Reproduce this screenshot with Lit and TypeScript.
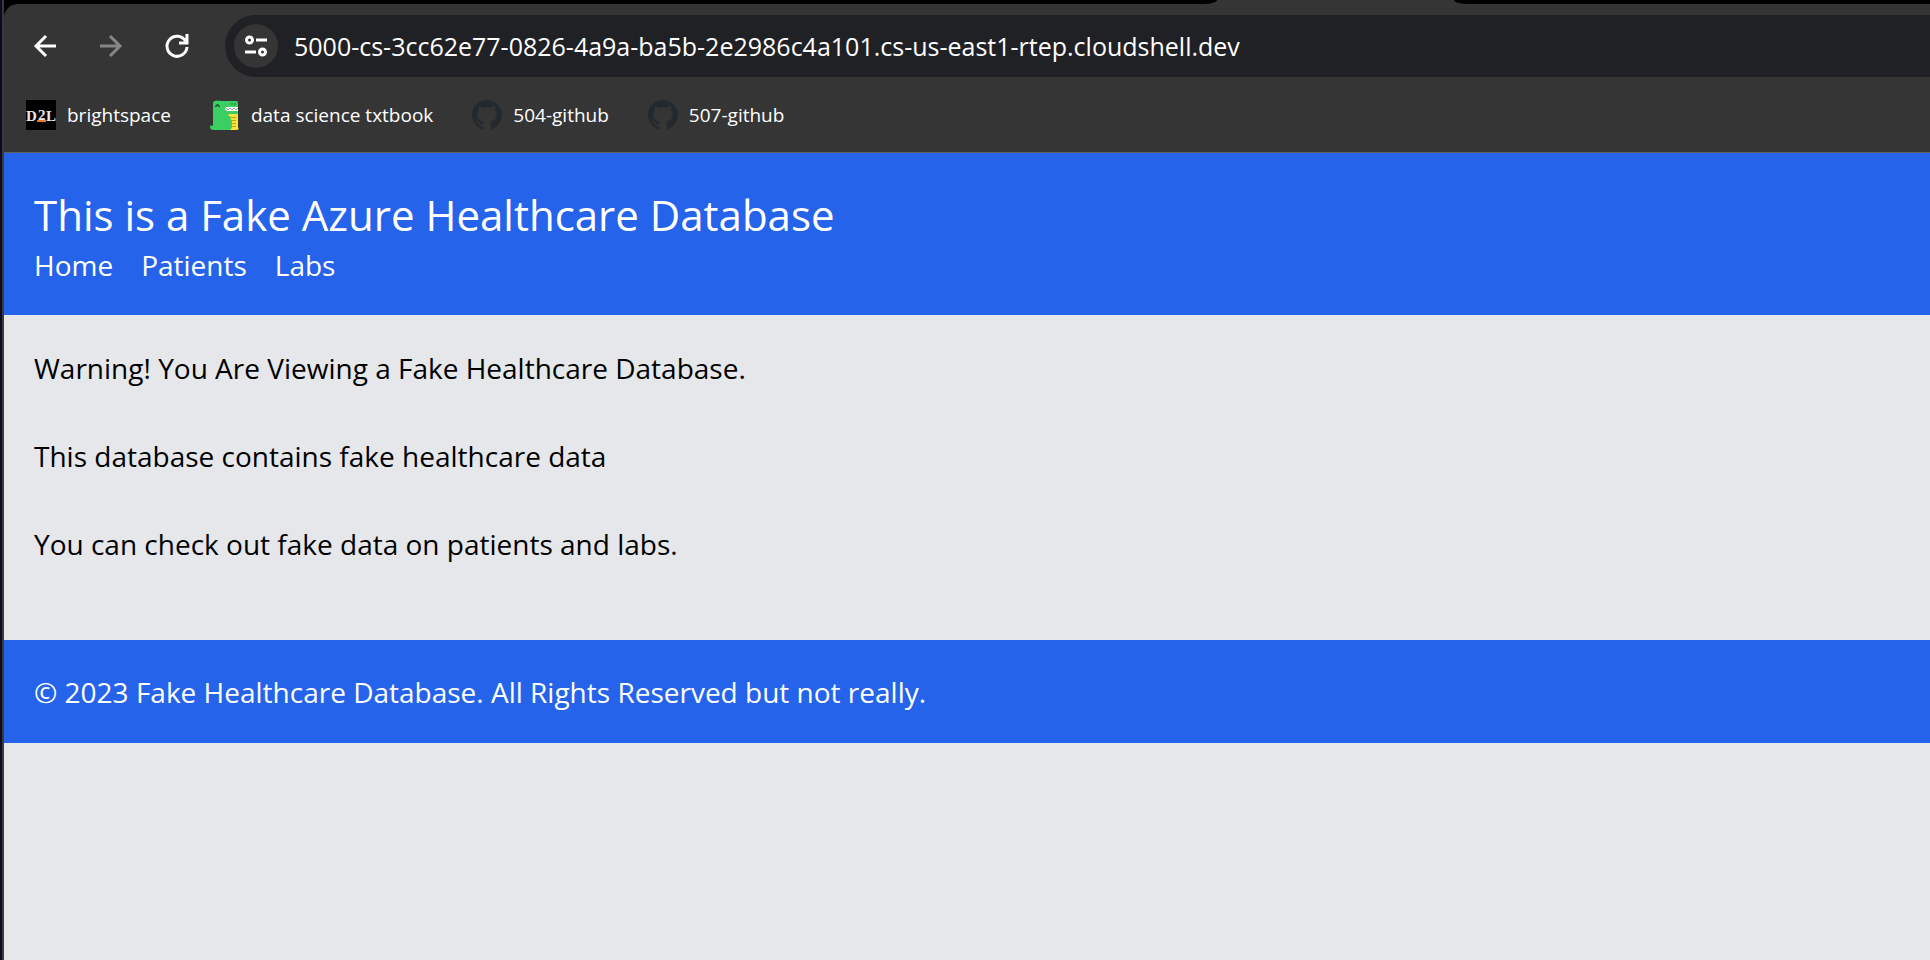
import { LitElement, html, css, svg } from "lit";
import { customElement } from "lit/decorators.js";

const octocat = svg`<path fill="#24292e" d="M8 0C3.58 0 0 3.58 0 8c0 3.54 2.29 6.53 5.47 7.59.4.07.55-.17.55-.38 0-.19-.01-.82-.01-1.49-2.01.37-2.53-.49-2.69-.94-.09-.23-.48-.94-.82-1.13-.28-.15-.68-.52-.01-.53.63-.01 1.08.58 1.23.82.72 1.21 1.87.87 2.33.66.07-.52.28-.87.51-1.07-1.78-.2-3.64-.89-3.64-3.95 0-.87.31-1.59.82-2.15-.08-.2-.36-1.02.08-2.12 0 0 .67-.21 2.2.82.64-.18 1.32-.27 2-.27s1.36.09 2 .27c1.53-1.04 2.2-.82 2.2-.82.44 1.1.16 1.92.08 2.12.51.56.82 1.27.82 2.15 0 3.07-1.87 3.75-3.65 3.95.29.25.54.73.54 1.48 0 1.07-.01 1.93-.01 2.2 0 .21.15.46.55.38A8.01 8.01 0 0 0 16 8c0-4.42-3.58-8-8-8z"/>`;

const githubIcon = html`<svg class="favicon" viewBox="0 0 16 16" aria-hidden="true">${octocat}</svg>`;

const d2lIcon = html`<svg class="favicon" viewBox="0 0 30 30" aria-hidden="true">
  <rect width="30" height="30" fill="#000" />
  <text class="d2l" x="0" y="21">D</text>
  <text class="d2l" x="12" y="20">2</text>
  <text class="d2l" x="20" y="21">L</text>
  <rect x="11" y="20" width="9" height="2" fill="#e87722" />
</svg>`;

const dinoIcon = html`<svg class="favicon" viewBox="0 0 30 30" aria-hidden="true">
  <path fill="#3bcf63" d="M3 3Q3 1 5 1Q6 0 8 1Q10 0 11 1L26 1Q28 1 28 3V8H17V12H22V30H4Q0 30 0 27V25Q2 27 3 25Z" />
  <path fill="#3bcf63" d="M15 8H28V14H15Z" />
  <path fill="#fff" d="M16 7H28V11H17Q15 10 15 9Z" />
  <path fill="none" stroke="#7d8085" stroke-width="0.800" d="M16 8L18 10L20 8L22 10L24 8L26 10L28 8" />
  <path fill="none" stroke="#14502b" stroke-width="1.500" d="M5.500 7Q7.500 2.500 9.500 7" />
  <circle cx="22" cy="4" r="0.700" fill="#14502b" /><circle cx="25" cy="4" r="0.700" fill="#14502b" />
  <path fill="#fbe33c" d="M19 14H28V27Q30 30 26 30H20L22 25V20L17 17Z" />
  <path stroke="#c99b1e" d="M21 17.500H26M21 20.500H26M22 23.500H26M22 26.500H26" />
  <path fill="#3bcf63" d="M15 16Q20 14 21 18Q20 20 16 20ZM15 24Q21 23 22 26Q22 30 18 30H15Z" />
</svg>`;

@customElement("app-root")
export class AppRoot extends LitElement {
  static styles = css`
    :host {
      display: block;
      font-family: "Open Sans", "Noto Sans", sans-serif;
      color: #000;
    }
    * {
      box-sizing: border-box;
    }
    .window {
      min-height: 100vh;
      display: flex;
      flex-direction: column;
      background: #e5e7eb;
      border-left: 2px solid #3b3840;
    }
    .desktop {
      border-left: 2px solid #0d0b22;
    }
    .tabs {
      height: 4px;
      display: flex;
      background: #353535;
    }
    .tabs-left {
      width: 63%;
      background: #000;
      border-bottom-right-radius: 14px 4px;
    }
    .tab {
      width: 12.3%;
    }
    .tabs-right {
      flex: 1;
      background: #000;
      border-bottom-left-radius: 14px 4px;
    }
    .chrome {
      background: #000;
    }
    .bars {
      background: #353535;
      border-top-left-radius: 14px;
      border-bottom: 1px solid #636363;
    }
    .toolbar {
      display: flex;
      align-items: center;
      height: 84px;
      padding: 0 0 0 19px;
      border-bottom: 1px solid #323232;
    }
    button {
      border: 0;
      padding: 0;
      background: none;
      color: #fff;
      display: grid;
      place-items: center;
      flex: none;
    }
    .nav-button {
      width: 44px;
      height: 44px;
      margin-right: 22px;
    }
    .nav-button:disabled {
      color: #868686;
    }
    .nav-button svg {
      width: 32px;
      height: 32px;
    }
    .omnibox {
      flex: 1;
      display: flex;
      align-items: center;
      gap: 16px;
      height: 62px;
      padding-left: 9px;
      margin-left: 4px;
      background: #202124;
      border-radius: 31px 0 0 31px;
    }
    .site-info {
      width: 44px;
      height: 44px;
      border-radius: 22px;
      background: #353535;
    }
    .site-info svg {
      width: 24px;
      height: 24px;
    }
    .url {
      flex: 1;
      min-width: 0;
      border: 0;
      outline: 0;
      padding: 0;
      background: none;
      color: #fff;
      font: 25px/36px "Open Sans", "Noto Sans", sans-serif;
    }
    .bookmarks {
      display: flex;
      align-items: center;
      gap: 39px;
      height: 64px;
      padding: 0 22px 10px;
    }
    .bookmark {
      display: flex;
      align-items: center;
      gap: 11px;
      color: #fff;
      text-decoration: none;
      font-size: 19px;
      line-height: 28px;
      white-space: nowrap;
    }
    .favicon {
      width: 30px;
      height: 30px;
      flex: none;
    }
    .d2l {
      font: bold 15px "Liberation Serif", serif;
      fill: #e8e8e8;
    }
    .site-header,
    .site-footer {
      background: #2563eb;
      color: #fff;
      padding: 30px 30px 29px;
    }
    .site-header {
      padding: 33px 30px 28px;
    }
    h1 {
      margin: 0;
      font-size: 42px;
      line-height: 57px;
      font-weight: 400;
    }
    .links {
      display: flex;
      gap: 28px;
    }
    .links a {
      color: inherit;
      text-decoration: none;
    }
    .links,
    p {
      font-size: 28px;
      line-height: 44px;
    }
    p {
      margin: 0;
    }
    main {
      display: grid;
      gap: 44px;
      padding: 31px 30px 74px;
    }
  `;

  render() {
    return html`
      <div class="desktop">
        <div class="window">
          <div class="chrome">
            <div class="tabs">
              <div class="tabs-left"></div>
              <div class="tab"></div>
              <div class="tabs-right"></div>
            </div>
            <div class="bars">
              <div class="toolbar">
                <button class="nav-button" aria-label="Back">
                  <svg viewBox="0 0 32 32" fill="none" stroke="currentColor" stroke-width="3">
                    <path d="M27 16H7M17 6L7 16L17 26" />
                  </svg>
                </button>
                <button class="nav-button" aria-label="Forward" disabled>
                  <svg viewBox="0 0 32 32" fill="none" stroke="currentColor" stroke-width="3">
                    <path d="M5 16H25M15 6L25 16L15 26" />
                  </svg>
                </button>
                <button class="nav-button" aria-label="Reload">
                  <svg viewBox="0 0 32 32" fill="none" stroke="currentColor" stroke-width="3">
                    <path d="M24.500 11A10 10 0 1 0 26 17M18 13H26V4" />
                  </svg>
                </button>
                <div class="omnibox">
                  <button class="site-info" aria-label="View site information">
                    <svg viewBox="0 0 24 24" fill="none" stroke="currentColor" stroke-width="3">
                      <circle cx="5.500" cy="6" r="3" />
                      <path d="M12 6H23M1 18H12" />
                      <circle cx="18.500" cy="18" r="3" />
                    </svg>
                  </button>
                  <input
                    class="url"
                    type="text"
                    aria-label="Address"
                    .value=${"5000-cs-3cc62e77-0826-4a9a-ba5b-2e2986c4a101.cs-us-east1-rtep.cloudshell.dev"}
                  />
                </div>
              </div>
              <nav class="bookmarks" aria-label="Bookmarks">
                <a class="bookmark" href="#">${d2lIcon}<span>brightspace</span></a>
                <a class="bookmark" href="#">${dinoIcon}<span>data science txtbook</span></a>
                <a class="bookmark" href="#">${githubIcon}<span>504-github</span></a>
                <a class="bookmark" href="#">${githubIcon}<span>507-github</span></a>
              </nav>
            </div>
          </div>
          <header class="site-header">
            <h1>This is a Fake Azure Healthcare Database</h1>
            <nav class="links">
              <a href="#">Home</a>
              <a href="#">Patients</a>
              <a href="#">Labs</a>
            </nav>
          </header>
          <main>
            <p>Warning! You Are Viewing a Fake Healthcare Database.</p>
            <p>This database contains fake healthcare data</p>
            <p>You can check out fake data on patients and labs.</p>
          </main>
          <footer class="site-footer">
            <p>© 2023 Fake Healthcare Database. All Rights Reserved but not really.</p>
          </footer>
        </div>
      </div>
    `;
  }
}
